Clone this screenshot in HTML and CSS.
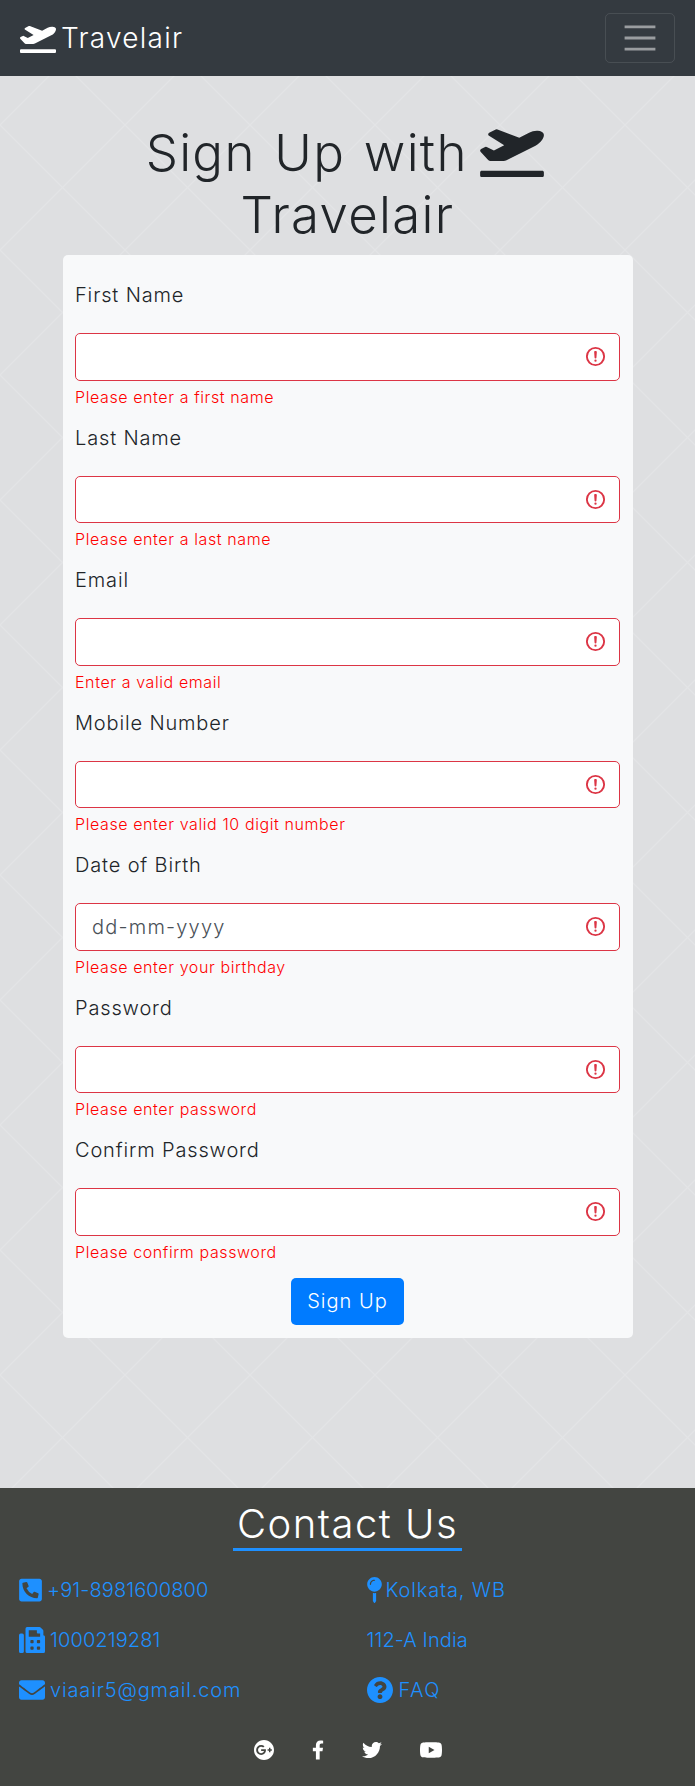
FILE: index.html
```html
<!DOCTYPE html>
<html>
<head>
    <title>Sign Up - Travelair</title>
    <link rel="stylesheet" href="styles.css">
</head>
<body>
    <svg class="icon-defs" width="0" height="0">
        <symbol id="plane" viewBox="0 0 640 512"><path d="M624 448H16c-8.84 0-16 7.16-16 16v32c0 8.84 7.16 16 16 16h608c8.84 0 16-7.16 16-16v-32c0-8.84-7.16-16-16-16zM80.55 341.27c6.28 6.84 15.1 10.72 24.33 10.71l130.54-.18a65.62 65.62 0 0 0 29.64-7.12l290.96-147.65c26.74-13.57 50.71-32.94 67.02-58.31 18.31-28.48 20.3-49.09 13.07-63.65-7.21-14.57-24.74-25.27-58.25-27.45-29.85-1.94-59.54 5.92-86.28 19.48l-98.51 49.99-218.7-82.06a17.799 17.799 0 0 0-18-1.11L90.62 67.29c-10.67 5.41-13.25 19.65-5.17 28.53l156.22 98.1-103.21 52.38-72.35-36.47a17.804 17.804 0 0 0-16.07.02L9.91 230.22c-10.44 5.3-13.19 19.12-5.57 28.08l76.21 82.97z"/></symbol>
    </svg>

    <nav class="navbar">
        <a class="brand" href="#">
            <svg class="brand-icon"><use href="#plane"/></svg>
            <span>Travelair</span>
        </a>
        <button class="toggler" type="button">
            <svg viewBox="0 0 30 30" width="42" height="42"><path d="M4 7h22M4 15h22M4 23h22" stroke="rgba(255,255,255,.5)" stroke-width="2"/></svg>
        </button>
    </nav>

    <main class="page">
        <h1 class="page-title">Sign Up with <svg class="title-icon"><use href="#plane"/></svg> Travelair</h1>

        <form class="signup-card">
            <div class="field">
                <label for="firstName">First Name</label>
                <input class="invalid" type="text" id="firstName">
                <div class="error">Please enter a first name</div>
            </div>
            <div class="field">
                <label for="lastName">Last Name</label>
                <input class="invalid" type="text" id="lastName">
                <div class="error">Please enter a last name</div>
            </div>
            <div class="field">
                <label for="email">Email</label>
                <input class="invalid" type="text" id="email">
                <div class="error">Enter a valid email</div>
            </div>
            <div class="field">
                <label for="mobile">Mobile Number</label>
                <input class="invalid" type="text" id="mobile">
                <div class="error">Please enter valid 10 digit number</div>
            </div>
            <div class="field">
                <label for="dob">Date of Birth</label>
                <input class="invalid date" type="text" id="dob" placeholder="dd-mm-yyyy">
                <div class="error">Please enter your birthday</div>
            </div>
            <div class="field">
                <label for="password">Password</label>
                <input class="invalid" type="password" id="password">
                <div class="error">Please enter password</div>
            </div>
            <div class="field">
                <label for="confirm">Confirm Password</label>
                <input class="invalid" type="password" id="confirm">
                <div class="error">Please confirm password</div>
            </div>
            <button class="submit-btn" type="submit">Sign Up</button>
        </form>
    </main>

    <footer class="footer">
        <h2 class="footer-title">Contact Us</h2>
        <div class="contact-grid">
            <a class="contact numeric" href="#">
                <svg class="contact-icon icon-phone" viewBox="0 0 448 512"><path d="M400 32H48C21.49 32 0 53.49 0 80v352c0 26.51 21.49 48 48 48h352c26.51 0 48-21.49 48-48V80c0-26.51-21.49-48-48-48zm-16.39 307.37l-15 65A15 15 0 0 1 354 416C194 416 64 286.29 64 126a15.7 15.7 0 0 1 11.63-14.61l65-15A18.23 18.23 0 0 1 144 96a16.27 16.27 0 0 1 13.79 9.09l30 70A17.9 17.9 0 0 1 189 181a17 17 0 0 1-5.5 11.61l-37.89 31a231.91 231.91 0 0 0 110.78 110.78l31-37.89A17 17 0 0 1 299 291a17.85 17.85 0 0 1 5.91 1.21l70 30A16.25 16.25 0 0 1 384 336a17.41 17.41 0 0 1-.39 3.37z"/></svg>
                <span>+91-8981600800</span>
            </a>
            <a class="contact" href="#">
                <svg class="contact-icon icon-pin" viewBox="0 0 288 512"><path d="M112 316.94v156.69l22.02 33.02c4.75 7.12 15.22 7.12 19.97 0L176 473.63V316.94c-10.39 1.92-21.06 3.06-32 3.06s-21.61-1.14-32-3.06zM144 0C64.47 0 0 64.47 0 144s64.47 144 144 144 144-64.47 144-144S223.53 0 144 0zm0 76c-37.5 0-68 30.5-68 68 0 6.62-5.38 12-12 12s-12-5.38-12-12c0-50.73 41.28-92 92-92 6.62 0 12 5.38 12 12s-5.38 12-12 12z"/></svg>
                <span>Kolkata, WB</span>
            </a>
            <a class="contact numeric" href="#">
                <svg class="contact-icon" viewBox="0 0 512 512"><path d="M480 160V77.25a32 32 0 0 0-9.38-22.63L425.37 9.37A32 32 0 0 0 402.75 0H160a32 32 0 0 0-32 32v448a32 32 0 0 0 32 32h320a32 32 0 0 0 32-32V192a32 32 0 0 0-32-32zM288 432a16 16 0 0 1-16 16h-32a16 16 0 0 1-16-16v-32a16 16 0 0 1 16-16h32a16 16 0 0 1 16 16zm0-128a16 16 0 0 1-16 16h-32a16 16 0 0 1-16-16v-32a16 16 0 0 1 16-16h32a16 16 0 0 1 16 16zm128 128a16 16 0 0 1-16 16h-32a16 16 0 0 1-16-16v-32a16 16 0 0 1 16-16h32a16 16 0 0 1 16 16zm0-128a16 16 0 0 1-16 16h-32a16 16 0 0 1-16-16v-32a16 16 0 0 1 16-16h32a16 16 0 0 1 16 16zm0-112H192V64h160v48a16 16 0 0 0 16 16h48zM64 128H32a32 32 0 0 0-32 32v320a32 32 0 0 0 32 32h32a32 32 0 0 0 32-32V160a32 32 0 0 0-32-32z"/></svg>
                <span>1000219281</span>
            </a>
            <a class="contact numeric" href="#">
                <span>112-A India</span>
            </a>
            <a class="contact" href="#">
                <svg class="contact-icon" viewBox="0 0 512 512"><path d="M502.3 190.8c3.9-3.1 9.7-.2 9.7 4.7V400c0 26.5-21.5 48-48 48H48c-26.5 0-48-21.5-48-48V195.6c0-5 5.7-7.8 9.7-4.7 22.4 17.4 52.1 39.5 154.1 113.6 21.1 15.4 56.7 47.8 92.2 47.6 35.7.3 72-32.8 92.3-47.6 102-74.1 131.6-96.3 154-113.7zM256 320c23.2.4 56.6-29.2 73.4-41.4 132.7-96.3 142.8-104.7 173.4-128.7 5.8-4.5 9.2-11.5 9.2-18.9v-19c0-26.5-21.5-48-48-48H48C21.5 64 0 85.5 0 112v19c0 7.4 3.4 14.3 9.2 18.9 30.6 23.9 40.7 32.4 173.4 128.7 16.8 12.2 50.2 41.8 73.4 41.4z"/></svg>
                <span>viaair5@gmail.com</span>
            </a>
            <a class="contact faq" href="#">
                <svg class="contact-icon" viewBox="8 8 496 496"><path d="M504 256c0 136.997-111.043 248-248 248S8 392.997 8 256C8 119.083 119.043 8 256 8s248 111.083 248 248zM262.655 90c-54.497 0-89.255 22.957-116.549 63.758-3.536 5.286-2.353 12.415 2.715 16.258l34.699 26.31c5.205 3.947 12.621 3.008 16.665-2.122 17.864-22.658 30.113-35.797 57.303-35.797 20.429 0 45.698 13.148 45.698 32.958 0 14.976-12.363 22.667-32.534 33.976C247.128 238.528 216 254.941 216 296v4c0 6.627 5.373 12 12 12h56c6.627 0 12-5.373 12-12v-1.333c0-28.462 83.186-29.647 83.186-106.667 0-58.002-60.165-102-116.531-102zM256 338c-25.365 0-46 20.635-46 46 0 25.364 20.635 46 46 46s46-20.636 46-46c0-25.365-20.635-46-46-46z"/></svg>
                <span>FAQ</span>
            </a>
        </div>
        <div class="social">
            <a href="#"><svg class="social-icon" viewBox="8 8 496 496"><path d="M256,8C119.1,8,8,119.1,8,256S119.1,504,256,504,504,392.9,504,256,392.9,8,256,8ZM185.3,380a124,124,0,0,1,0-248c31.3,0,60.1,11,83,32.3l-33.6,32.6c-13.2-12.9-31.3-19.1-49.4-19.1-42.9,0-77.2,35.5-77.2,78.1S142.3,334,185.3,334c32.6,0,64.9-19.1,70.1-53.3H185.3V238.1H302.2a109.2,109.2,0,0,1,1.9,20.7c0,70.8-47.5,121.2-118.8,121.2ZM415.5,273.8v35.5H380V273.8H344.5V238.3H380V202.8h35.5v35.5h35.2v35.5Z"/></svg></a>
            <a href="#"><svg class="social-icon icon-f" viewBox="0 0 320 512"><path d="M279.14 288l14.22-92.66h-88.91v-60.13c0-25.35 12.42-50.06 52.24-50.06h40.42V6.26S260.43 0 225.36 0c-73.22 0-121.08 44.38-121.08 124.72v70.62H22.89V288h81.39v224h100.17V288z"/></svg></a>
            <a href="#"><svg class="social-icon" viewBox="0 0 512 512"><path d="M459.37 151.716c.325 4.548.325 9.097.325 13.645 0 138.72-105.583 298.558-298.558 298.558-59.452 0-114.68-17.219-161.137-47.106 8.447.974 16.568 1.299 25.34 1.299 49.055 0 94.213-16.568 130.274-44.832-46.132-.975-84.792-31.188-98.112-72.772 6.498.974 12.995 1.624 19.818 1.624 9.421 0 18.843-1.3 27.614-3.573-48.081-9.747-84.143-51.98-84.143-102.985v-1.299c13.969 7.797 30.214 12.67 47.431 13.319-28.264-18.843-46.781-51.005-46.781-87.391 0-19.492 5.197-37.36 14.294-52.954 51.655 63.675 129.3 105.258 216.365 109.807-1.624-7.797-2.599-15.918-2.599-24.04 0-57.828 46.782-104.934 104.934-104.934 30.213 0 57.502 12.67 76.67 33.137 23.715-4.548 46.456-13.32 66.599-25.34-7.798 24.366-24.366 44.833-46.132 57.827 21.117-2.273 41.584-8.122 60.426-16.243-14.292 20.791-32.161 39.308-52.628 54.253z"/></svg></a>
            <a href="#"><svg class="social-icon icon-yt" viewBox="15 64 546 384"><path d="M549.655 124.083c-6.281-23.65-24.787-42.276-48.284-48.597C458.781 64 288 64 288 64S117.22 64 74.629 75.486c-23.497 6.322-42.003 24.947-48.284 48.597-11.412 42.867-11.412 132.305-11.412 132.305s0 89.438 11.412 132.305c6.281 23.65 24.787 41.5 48.284 47.821C117.22 448 288 448 288 448s170.78 0 213.371-11.486c23.497-6.321 42.003-24.171 48.284-47.821 11.412-42.867 11.412-132.305 11.412-132.305s0-89.438-11.412-132.305zm-317.51 213.508V175.185l142.739 81.205-142.739 81.201z"/></svg></a>
        </div>
    </footer>
</body>
</html>
```

FILE: styles.css
```css
* {
    box-sizing: border-box;
}

body {
    margin: 0;
    font-family: "Inter", "Liberation Sans", sans-serif;
    font-weight: 300;
    font-size: 20px;
    line-height: 30px;
    letter-spacing: 0.85px;
    color: #212529;
    background-color: #dedfe1;
    background-image:
        linear-gradient(45deg, transparent 49.4%, #e3e4e6 50%, transparent 50.6%),
        linear-gradient(135deg, transparent 49.4%, #e3e4e6 50%, transparent 50.6%);
    background-size: 125px 125px;
}

a {
    text-decoration: none;
}

.icon-defs {
    position: absolute;
}

/* navbar */
.navbar {
    height: 76px;
    padding: 13px 20px;
    display: flex;
    align-items: center;
    justify-content: space-between;
    background-color: #343a40;
}

.brand {
    display: flex;
    align-items: center;
    gap: 5px;
    color: #fff;
    font-size: 28px;
    letter-spacing: 1.25px;
}

.brand-icon {
    width: 36px;
    height: 29px;
    fill: #fff;
}

.toggler {
    width: 70px;
    height: 50px;
    padding: 0;
    display: flex;
    align-items: center;
    justify-content: center;
    background: none;
    border: 1px solid rgba(255, 255, 255, .1);
    border-radius: 5px;
}

/* form */
.page {
    height: 1412px;
    padding-top: 46px;
}

.page-title {
    width: 570px;
    margin: 0 auto 10px;
    font-size: 51px;
    font-weight: 300;
    line-height: 61.6px;
    letter-spacing: 1.3px;
    word-spacing: 3px;
    text-align: center;
}

.title-icon {
    width: 64px;
    height: 51px;
    margin-left: -6px;
    margin-right: 5px;
    vertical-align: -6px;
    fill: #212529;
}

.signup-card {
    width: 570px;
    margin: 0 0 0 63px;
    padding: 25px 13px 13px 12px;
    display: flex;
    flex-direction: column;
    background-color: #f8f9fa;
    border-radius: 5px;
}

.field {
    margin-bottom: 14px;
}

.field label {
    display: block;
    margin-bottom: 23px;
}

.field input {
    display: block;
    width: 100%;
    height: 47.5px;
    padding: 8px 16px;
    font-family: inherit;
    font-weight: 300;
    font-size: 20px;
    color: #495057;
    background-color: #fff;
    border: 1px solid #dc3545;
    border-radius: 5px;
    outline: none;
}

.field input.invalid {
    background-image: url("data:image/svg+xml,%3csvg xmlns='http://www.w3.org/2000/svg' width='12' height='12' fill='none' stroke='%23dc3545' viewBox='0 0 12 12'%3e%3ccircle cx='6' cy='6' r='4.5'/%3e%3cpath stroke-linejoin='round' d='M5.8 3.6h.4L6 6.5z'/%3e%3ccircle cx='6' cy='8.2' r='.6' fill='%23dc3545' stroke='none'/%3e%3c/svg%3e");
    background-repeat: no-repeat;
    background-position: right 12px center;
    background-size: 23px 23px;
}

.field input.date::placeholder {
    color: #495057;
    opacity: 1;
    letter-spacing: 1.2px;
}

.error {
    margin-top: 4px;
    font-size: 16px;
    line-height: 24px;
    letter-spacing: 0.6px;
    color: #f00;
}

.submit-btn {
    align-self: center;
    width: 113px;
    height: 47px;
    padding: 0;
    font-family: inherit;
    font-weight: 300;
    font-size: 20px;
    letter-spacing: 1px;
    color: #fff;
    background-color: #007bff;
    border: none;
    border-radius: 5px;
}

/* footer */
.footer {
    height: 298px;
    padding-top: 12px;
    background-color: #434541;
}

.footer-title {
    width: 229px;
    margin: 0 auto 24px;
    font-size: 40px;
    font-weight: 300;
    line-height: 48px;
    letter-spacing: 1.5px;
    color: #fff;
    text-align: center;
    white-space: nowrap;
    border-bottom: 3px solid #1e90ff;
}

.contact-grid {
    padding: 0 19px;
    display: grid;
    grid-template-columns: 1fr 1fr;
    column-gap: 38px;
    row-gap: 20px;
}

.contact {
    display: flex;
    align-items: center;
    gap: 5px;
    color: #1e90ff;
}

.contact.numeric {
    letter-spacing: 0.1px;
}

.contact.faq {
    gap: 6px;
    letter-spacing: 1.5px;
}

.contact-icon {
    width: 26px;
    height: 26px;
    fill: #1e90ff;
}

.contact-icon.icon-phone {
    width: 23px;
}

.contact-icon.icon-pin {
    width: 15px;
    margin-right: -1px;
}

.social {
    margin-top: 35px;
    display: flex;
    justify-content: center;
    gap: 38px;
}

.social a {
    display: flex;
}

.social-icon {
    height: 20px;
    width: 20px;
    fill: #fff;
}

.social-icon.icon-f {
    width: 12px;
}

.social-icon.icon-yt {
    width: 22px;
}
```
